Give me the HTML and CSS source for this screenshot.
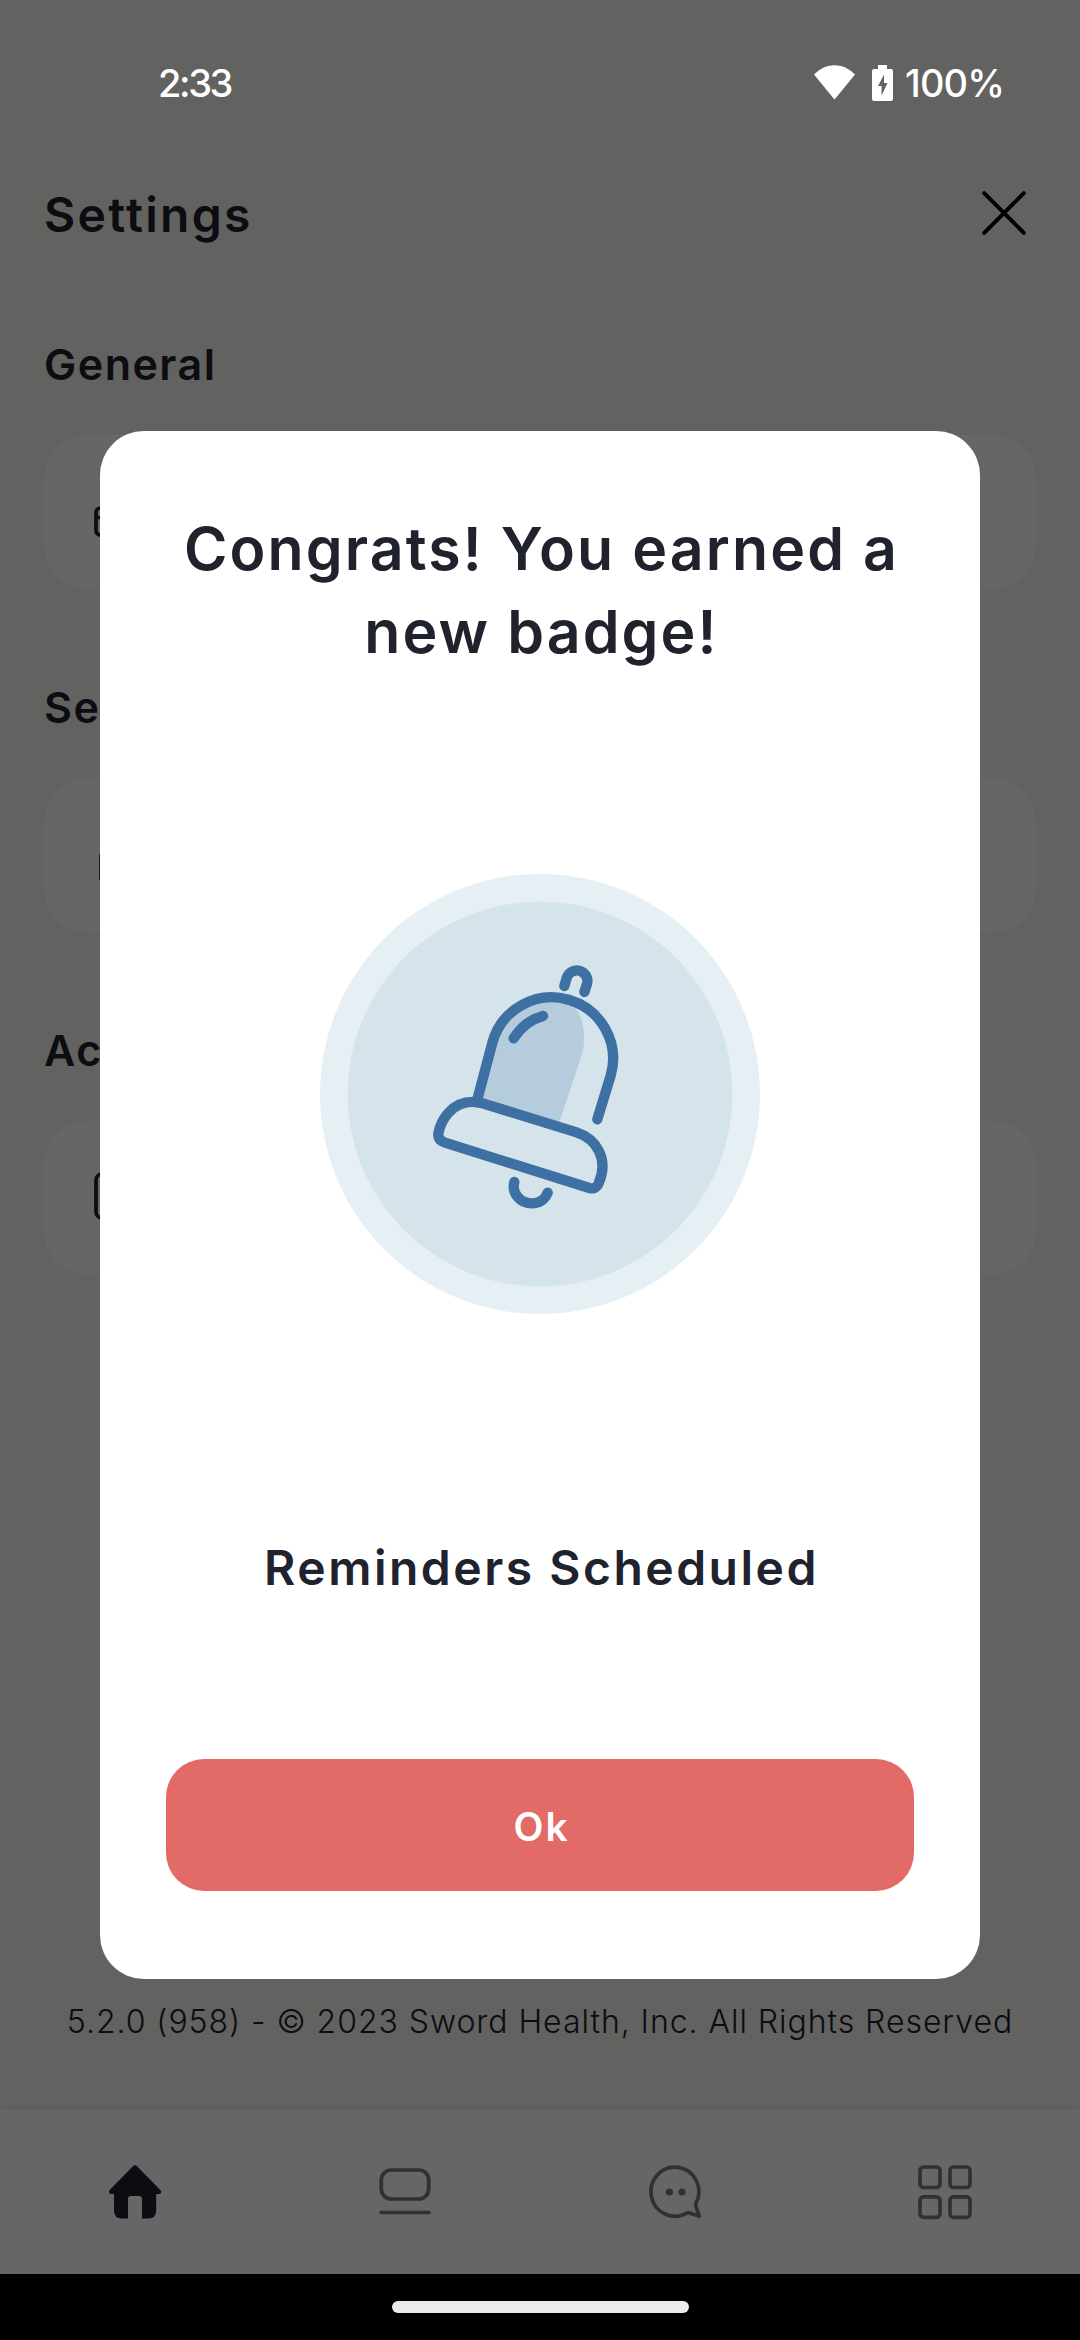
FILE: index.html
```html
<!DOCTYPE html>
<html lang="en">
<head>
<meta charset="utf-8">
<title>Settings</title>
<link rel="stylesheet" href="styles.css">
</head>
<body>
<div class="screen">
  <div class="app">
    <header class="header">
      <h1 class="page-title">Settings</h1>
      <svg class="close" viewBox="0 0 44 44"><path d="M2.2 2.2l39.6 39.6M41.8 2.2L2.2 41.8"/></svg>
    </header>
    <main class="sections">
      <section class="section">
        <h2 class="section-title">General</h2>
        <div class="card">
          <svg class="card-icon" viewBox="0 0 44 44"><path d="M2 40V23q0-5 5-5h30q5 0 5 5v17q0 5-5 5H7q-5 0-5-5zM2 27.500h40"/></svg>
        </div>
      </section>
      <section class="section">
        <h2 class="section-title">Security</h2>
        <div class="card">
          <svg class="card-icon" viewBox="0 0 44 44"><path d="M7 23h30v22H7z"/></svg>
        </div>
      </section>
      <section class="section">
        <h2 class="section-title">Account</h2>
        <div class="card">
          <svg class="card-icon" viewBox="0 0 44 44"><rect x="2" y="-2" width="34" height="44" rx="6"/></svg>
        </div>
      </section>
    </main>
    <p class="copyright">5.2.0 (958) - © 2023 Sword Health, Inc. All Rights Reserved</p>
    <nav class="tabs">
      <svg class="tab tab-active" viewBox="0 0 54 54"><path d="M25.2 1.1q1.8-1.8 3.6 0l24 24.500q1.200 3-1.500 3.400H48.200v16.500q0 8-8 8H34V34q0-3-3-3H23q-3 0-3 3v19.500H14q-8 0-8-8V29H2.600Q.2 28 1.200 25.600z"/></svg>
      <svg class="tab" viewBox="0 0 54 54"><rect x="3.300" y="5" width="47.400" height="29" rx="10"/><path d="M3 47.500h48"/></svg>
      <svg class="tab" viewBox="0 0 54 54"><path d="M51.200 51.200 48 41.500Q47.300 39.800 48 38.300A24 24.500 0 1 0 39 47.800q1-.6 2 0z"/><circle class="dot" cx="21.300" cy="27" r="3.600"/><circle class="dot" cx="34" cy="27" r="3.600"/></svg>
      <svg class="tab" viewBox="0 0 54 54"><rect x="2" y="2" width="20" height="20.500" rx="3.500"/><rect x="32" y="2" width="20" height="20.500" rx="3.500"/><rect x="2" y="31.800" width="20" height="20.500" rx="3.500"/><rect x="32" y="31.800" width="20" height="20.500" rx="3.500"/></svg>
    </nav>
  </div>
  <div class="system-nav"><div class="home-pill"></div></div>

  <div class="scrim">
    <div class="status">
      <span class="clock">2:33</span>
      <svg class="wifi" viewBox="0 0 41 35"><path d="M0 9.500C12-3 29-3 41 9.500L20.500 34.500z"/></svg>
      <svg class="battery" viewBox="0 0 21 36"><path fill-rule="evenodd" d="M6 0h9v4h4q2 0 2 2v28q0 2-2 2H2q-2 0-2-2V6q0-2 2-2h4zM12 9.500 6 21h3.500v9.500L15.500 18H12z"/></svg>
      <span class="charge">100%</span>
    </div>
    <div class="dialog">
      <h2 class="dialog-title">Congrats! You earned a<br>new badge!</h2>
      <svg class="badge" viewBox="60 72 1320 1320">
        <circle class="badge-rim" cx="720" cy="732" r="660"/>
        <circle class="badge-face" cx="720" cy="732" r="577"/>
        <path class="bell-shade" d="M532 748 578 575A184 184 0 0 1 808 450C850 495 860 550 848 605L779 815z"/>
        <g class="bell-line">
          <path d="M532 748 578 575A184 184 0 0 1 932 677L892 808"/>
          <path d="M641 565Q675 512 729 498"/>
          <path d="M793 408 800 384A31 31 0 0 1 861 402L853 426"/>
          <path d="M548 760 830 847C893 868 925 930 897 997Q889 1020 868 1014L435 878Q413 870 415 850C422 812 455 752 525 756Q537 757 548 760z"/>
          <path d="M643 996C634 1030 660 1060 696 1060C718 1060 736 1048 743 1028"/>
        </g>
      </svg>
      <p class="badge-name">Reminders Scheduled</p>
      <button class="ok">Ok</button>
    </div>
  </div>
</div>
</body>
</html>
```
FILE: styles.css
```css
* { box-sizing: border-box; margin: 0; padding: 0; }
body { width: 1080px; height: 2340px; overflow: hidden; font-family: Inter, "Noto Sans", sans-serif; color: #20222d; }
svg { display: block; flex: none; overflow: visible; }

.screen { position: relative; display: flex; flex-direction: column; width: 1080px; height: 2340px; background: #000; }
.app { flex: 1; display: flex; flex-direction: column; padding-top: 165px; background: #f5f4ef; }

.header { display: flex; align-items: center; justify-content: space-between; height: 98px; padding: 0 54px 2px 44px; }
.page-title { font-size: 48px; font-weight: 600; letter-spacing: 2.3px; line-height: 60px; padding-top: 3px; }
.close { width: 44px; height: 44px; fill: none; stroke: #000; stroke-width: 4; stroke-linecap: round; }

.sections { flex: 1; display: flex; flex-direction: column; gap: 90px; padding: 73px 44px 0; }
.section { display: flex; flex-direction: column; gap: 43px; }
.section-title { font-size: 43px; font-weight: 600; line-height: 56px; letter-spacing: 1.5px; }
.card { display: flex; align-items: center; height: 154px; padding-left: 50px; border-radius: 44px; background: #fff; }
.card-icon { width: 44px; height: 44px; fill: none; stroke: #20222d; stroke-width: 3.7; }

.copyright { padding-bottom: 67px; text-align: center; font-size: 32px; font-weight: 300; line-height: 40px; letter-spacing: 0.95px; white-space: nowrap; }

.tabs { display: grid; grid-template-columns: repeat(4, 1fr); align-items: center; justify-items: center; height: 165px; background: #fff; box-shadow: 0 -1px 6px rgba(0, 0, 0, 0.08); }
.tab { width: 54px; height: 54px; fill: none; stroke: #787a88; stroke-width: 3.7; stroke-linecap: round; stroke-linejoin: round; }
.tab-active { fill: #20222d; stroke: none; }
.dot { fill: #787a88; stroke: none; }

.system-nav { display: flex; align-items: center; justify-content: center; height: 66px; }
.home-pill { width: 297px; height: 12px; border-radius: 6px; background: #ebebeb; }

.scrim { position: absolute; left: 0; right: 0; top: 0; bottom: 66px; display: flex; flex-direction: column; align-items: center; background: rgba(0, 0, 0, 0.6); }
.status { display: flex; align-items: center; align-self: stretch; height: 165px; padding: 0 76px 0 158px; margin-bottom: 266px; color: #fff; font-size: 38px; font-weight: 500; }
.clock { flex: 1; letter-spacing: -2.4px; }
.charge { letter-spacing: -0.9px; }
.wifi { width: 41px; height: 35px; margin-right: 17px; fill: #fff; }
.battery { width: 21px; height: 36px; margin-right: 12px; fill: #fff; }

.dialog { display: flex; flex-direction: column; align-items: center; width: 880px; height: 1548px; padding: 76px 66px 88px; border-radius: 44px; background: #fff; text-align: center; }
.dialog-title { padding-left: 3px; font-size: 59px; font-weight: 600; line-height: 83px; letter-spacing: 2.1px; white-space: nowrap; }
.badge { width: 440px; height: 440px; margin-top: 201px; }
.badge-rim { fill: #e5eff4; }
.badge-face { fill: #d5e4ea; }
.bell-shade { fill: #b5ccdc; }
.bell-line { fill: none; stroke: #3f70a4; stroke-width: 31; stroke-linecap: round; stroke-linejoin: round; }
.badge-name { margin-top: 224px; padding-left: 3px; font-size: 48px; font-weight: 600; line-height: 60px; letter-spacing: 2.5px; white-space: nowrap; }
.ok { align-self: stretch; height: 132px; margin-top: 161px; padding: 3px 0 0 3px; border: 0; border-radius: 38px; background: #e26a67; color: #fff; font: 600 39px/50px Inter, "Noto Sans", sans-serif; letter-spacing: 2px; }
```
